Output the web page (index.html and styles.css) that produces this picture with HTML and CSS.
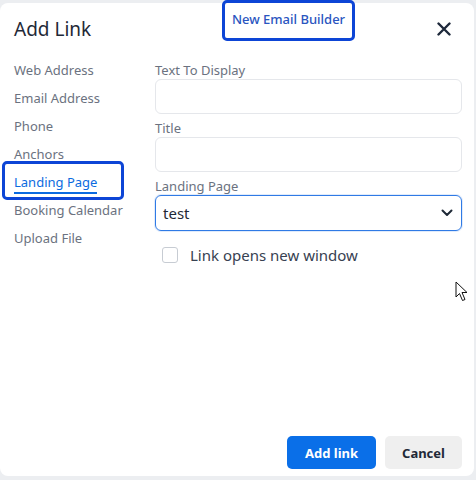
FILE: index.html
```html
<!DOCTYPE html>
<html>
<head>
<meta charset="utf-8">
<link rel="stylesheet" href="styles.css">
</head>
<body>
<div class="modal">
  <div class="header">
    <h1 class="title">Add Link</h1>
    <button class="close" aria-label="Close">
      <svg width="14" height="14" viewBox="0 0 14 14"><path d="M1.5 1.5L12.5 12.5M12.5 1.5L1.5 12.5" stroke="#1e293b" stroke-width="2.4" stroke-linecap="round"/></svg>
    </button>
  </div>
  <div class="body">
    <ul class="nav">
      <li>Web Address</li>
      <li>Email Address</li>
      <li>Phone</li>
      <li>Anchors</li>
      <li class="active"><span>Landing Page</span></li>
      <li>Booking Calendar</li>
      <li>Upload File</li>
    </ul>
    <div class="form">
      <label class="label">Text To Display</label>
      <div class="input"></div>
      <label class="label">Title</label>
      <div class="input"></div>
      <label class="label">Landing Page</label>
      <div class="select">
        <span>test</span>
        <svg width="12" height="8" viewBox="0 0 12 8"><path d="M1.5 1.5L6 6L10.5 1.5" fill="none" stroke="#1f2937" stroke-width="2" stroke-linecap="round" stroke-linejoin="round"/></svg>
      </div>
      <div class="check">
        <span class="box"></span>
        <span class="check-text">Link opens new window</span>
      </div>
    </div>
  </div>
  <div class="footer">
    <button class="btn primary">Add link</button>
    <button class="btn secondary">Cancel</button>
  </div>
  <div class="annot annot-top">New Email Builder</div>
  <div class="annot annot-side"></div>
  <svg class="cursor" width="16" height="22" viewBox="0 0 16 22"><path d="M1 1L1 16L4.5 12.5L7.5 19.5L10 18.5L7 11.5L12 11.5Z" fill="#fff" stroke="#111" stroke-width="1" stroke-linejoin="miter"/></svg>
</div>
</body>
</html>
```

FILE: styles.css
```css
* { box-sizing: border-box; }
html, body { margin: 0; padding: 0; }
body {
  background: #eceef1;
  font-family: "Noto Sans", "Open Sans", sans-serif;
  width: 476px;
  height: 480px;
  overflow: hidden;
  padding-top: 3px;
}
.modal {
  position: relative;
  width: 474px;
  height: 473px;
  background: #fff;
  border-radius: 8px;
  display: flex;
  flex-direction: column;
}
.header {
  display: flex;
  justify-content: space-between;
  align-items: center;
  padding: 1px 23px 0 14px;
  height: 50px;
}
.title {
  margin: 0;
  font-size: 19px;
  font-weight: 400;
  color: #1f2937;
  line-height: 26px;
}
.close {
  border: 0;
  background: none;
  padding: 0;
  width: 14px;
  height: 14px;
  display: flex;
}
.body {
  display: grid;
  grid-template-columns: 155px 1fr;
  padding-right: 12px;
  margin-top: 3px;
}
.nav {
  list-style: none;
  margin: 0;
  padding: 0 0 0 14px;
}
.nav li {
  font-size: 13px;
  line-height: 28px;
  color: #6b7280;
}
.nav li.active span {
  color: #0b6be0;
  border-bottom: 2px solid #0b6be0;
  padding-bottom: 1px;
}
.form {
  display: flex;
  flex-direction: column;
  padding-top: 5px;
}
.label {
  font-size: 13px;
  line-height: 18px;
  color: #6b7280;
}
.input {
  height: 35px;
  border: 1px solid #e5e7eb;
  border-radius: 6px;
  margin-bottom: 5px;
}
.select {
  height: 36px;
  border: 1px solid #2f7ae5;
  border-radius: 6px;
  display: flex;
  align-items: center;
  justify-content: space-between;
  padding: 0 8px 0 7px;
  font-size: 15px;
  color: #1f2937;
  box-shadow: 0 0 0 1px rgba(47,122,229,0.15);
}
.check {
  display: flex;
  align-items: center;
  gap: 12px;
  margin-top: 14px;
  padding-left: 7px;
}
.box {
  width: 16px;
  height: 16px;
  border: 1px solid #c7ccd3;
  border-radius: 3px;
}
.check-text {
  font-size: 15px;
  color: #374151;
}
.footer {
  margin-top: auto;
  display: flex;
  justify-content: flex-end;
  gap: 9px;
  padding: 0 12px 7px 0;
}
.btn {
  height: 33px;
  border: 0;
  border-radius: 5px;
  font-family: "Noto Sans", "Open Sans", sans-serif;
  font-size: 13px;
  font-weight: 700;
}
.primary {
  width: 89px;
  background: #0a6fe8;
  color: #fff;
}
.secondary {
  width: 77px;
  background: #efefef;
  color: #1f2937;
}
.annot {
  position: absolute;
  border: 3px solid #0d45d6;
  border-radius: 5px;
}
.annot-top {
  left: 222px;
  top: -3px;
  width: 133px;
  height: 41px;
  background: #fff;
  font-size: 13px;
  font-weight: 500;
  color: #2a55c0;
  text-align: center;
  line-height: 33px;
}
.annot-side {
  left: 2px;
  top: 158px;
  width: 122px;
  height: 39px;
}
.cursor {
  position: absolute;
  left: 455px;
  top: 278px;
}
```
